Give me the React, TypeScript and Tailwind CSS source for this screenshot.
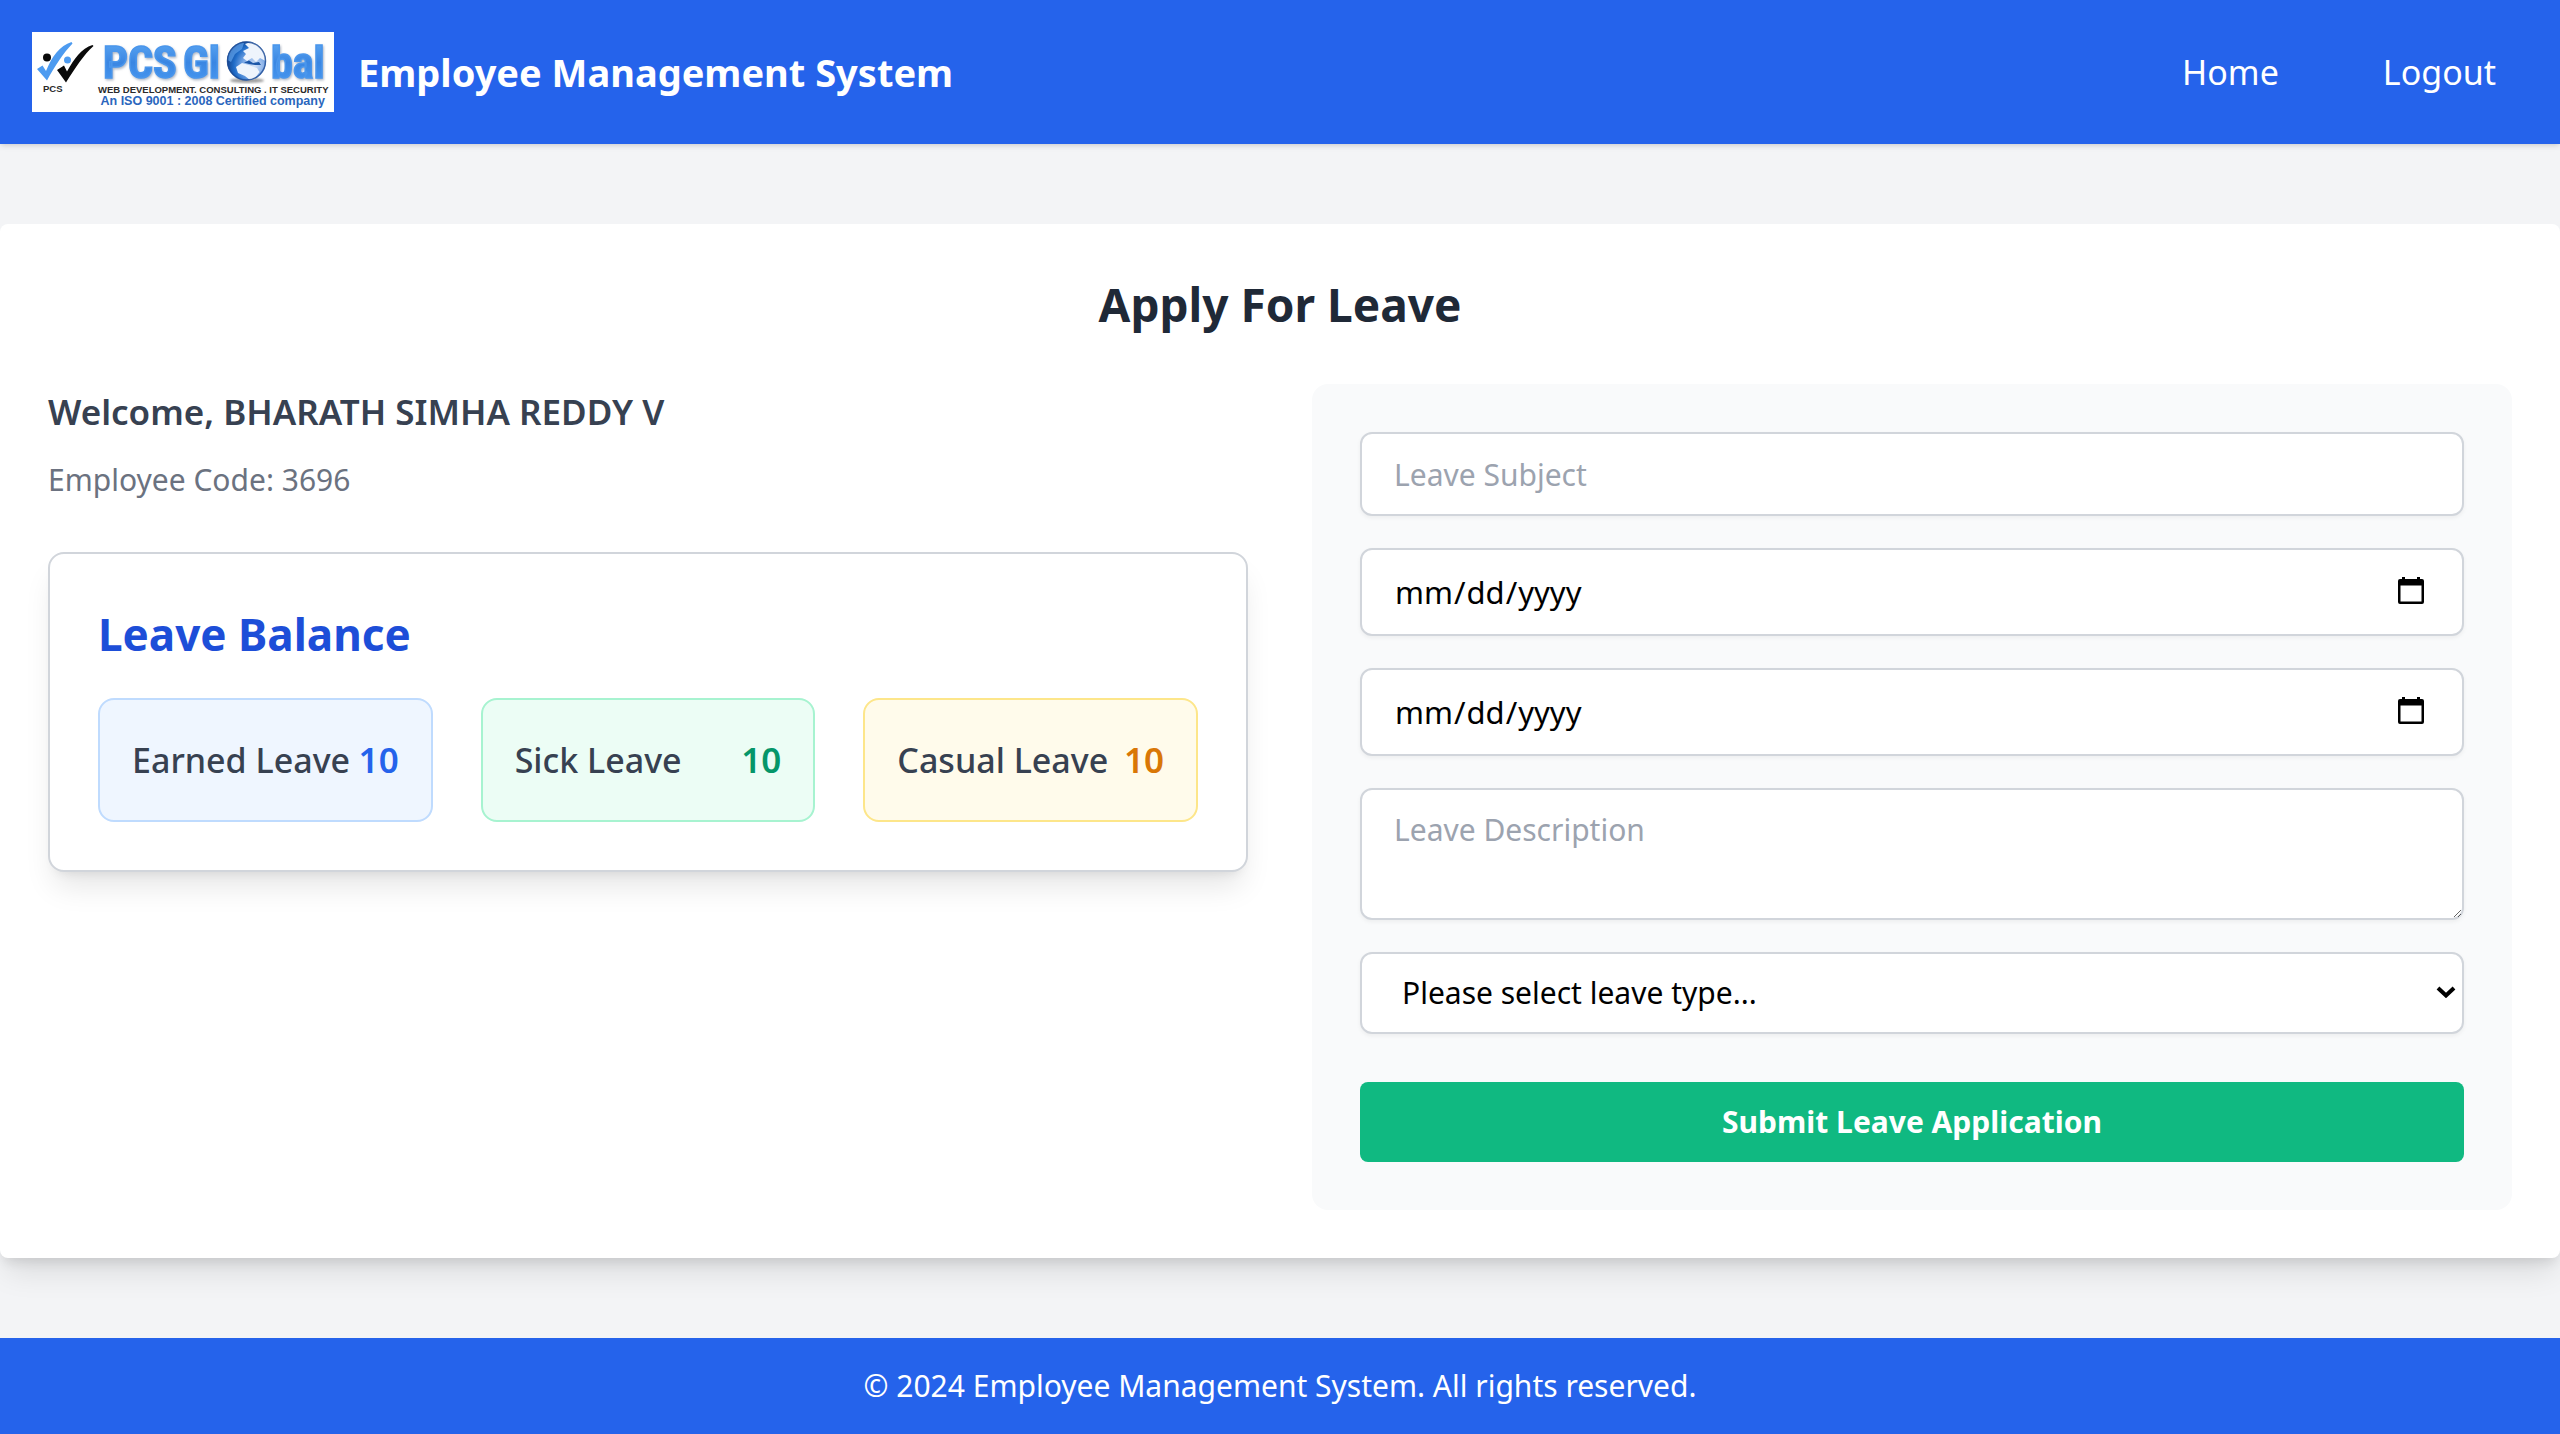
import { useId } from 'react';

function Logo() {
  const id = useId();
  const text = `${id}-text`;
  const globe = `${id}-globe`;
  const clip = `${id}-clip`;
  const soft = `${id}-soft`;
  return (
    <svg viewBox="0 0 604 160" className="h-20 w-auto shrink-0 bg-white" role="img" aria-label="PCS Global">
      <defs>
        <linearGradient id={text} x1="0" y1="0" x2="0" y2="1">
          <stop offset="0" stopColor="#62adf6" />
          <stop offset="0.5" stopColor="#3a86e2" />
          <stop offset="1" stopColor="#4a9cf4" />
        </linearGradient>
        <radialGradient id={globe} cx="0.7" cy="0.62" r="0.75">
          <stop offset="0" stopColor="#d5e2f6" />
          <stop offset="0.4" stopColor="#7aa8e6" />
          <stop offset="0.7" stopColor="#1f6cc8" />
          <stop offset="1" stopColor="#123a80" />
        </radialGradient>
        <clipPath id={clip}>
          <circle cx="429" cy="58" r="39" />
        </clipPath>
        <filter id={soft} x="-20%" y="-20%" width="140%" height="140%">
          <feGaussianBlur stdDeviation="2" />
        </filter>
      </defs>
      <path
        d="M10 74 L21 67 L28 78 C39 50 56 27 79 20 L81 23 C63 42 47 66 30 97 Z"
        fill="#4d9bf0"
      />
      <circle cx="30" cy="51" r="8" fill="#0a0a0a" />
      <circle cx="71" cy="56" r="7" fill="#4d9bf0" />
      <path
        d="M50 76 L64 67 L70 79 C84 54 99 32 121 26 L123 28 C103 46 88 70 68 101 Z"
        fill="#0a0a0a"
      />
      <g className="font-['Liberation_Sans',sans-serif] font-bold">
        <text x="22" y="120" fontSize="19" fill="#2a2a2a">
          PCS
        </text>
        <text x="132" y="121" fontSize="19" fill="#2a2a2a">
          WEB DEVELOPMENT. CONSULTING . IT SECURITY
        </text>
        <text x="137" y="146" fontSize="25" fill="#2a66bd">
          An ISO 9001 : 2008 Certified company
        </text>
      </g>
      <g
        className="font-['Roboto_Condensed','Roboto',sans-serif] font-bold"
        fontSize="88"
        fill={`url(#${text})`}
        stroke="#4a96ec"
        strokeWidth="3"
        style={{ filter: 'drop-shadow(2px 3px 2px rgb(90 110 140 / 0.5))' }}
      >
        <text x="142" y="91">
          PCS
        </text>
        <text x="302" y="91">
          Gl
        </text>
        <text x="478" y="91">
          bal
        </text>
      </g>
      <ellipse cx="430" cy="97" rx="34" ry="5" fill="#777" opacity="0.7" filter={`url(#${soft})`} />
      <circle cx="429" cy="58" r="39" fill={`url(#${globe})`} />
      <g clipPath={`url(#${clip})`}>
        <path d="M392 40 C400 24 412 20 424 22 L420 34 L406 44 L398 60 L391 56 Z" fill="#5fa4ee" opacity="0.7" />
        <path
          d="M426 24 L438 20 L456 26 L468 44 L467 58 L456 52 L448 60 L440 52 L430 58 L422 52 L428 44 L422 38 L434 32 Z"
          fill="#eef4fc"
        />
        <path d="M408 70 L420 62 L434 66 L450 72 L455 80 L446 92 L436 96 L426 88 L412 82 Z" fill="#eef4fc" />
        <path d="M424 61 L434 57 L442 62 L454 60 L458 66 L446 66 L434 64 Z" fill="#1c57a8" />
      </g>
      <circle cx="429" cy="58" r="38" fill="none" stroke="#1b4a94" strokeWidth="3" opacity="0.8" />
    </svg>
  );
}

const balances = [
  { label: 'Earned Leave', value: 10, box: 'border-[#bfdbfe] bg-[#eff6ff]', number: 'text-[#2563eb]' },
  { label: 'Sick Leave', value: 10, box: 'border-[#a7f3d0] bg-[#ecfdf5]', number: 'text-[#059669]' },
  { label: 'Casual Leave', value: 10, box: 'border-[#fde68a] bg-[#fffbeb]', number: 'text-[#d97706]' },
];

const field =
  'block w-full rounded-xl border-2 border-[#d1d5db] bg-white px-8 text-black shadow-[0_2px_4px_rgb(0_0_0/0.05)] placeholder:text-[#9ca3af]';

function DateField({ label }: { label: string }) {
  return (
    <div className="relative">
      <input
        type="date"
        aria-label={label}
        className={`${field} h-[88px] text-[31px] [&::-webkit-calendar-picker-indicator]:opacity-0`}
      />
      <svg
        viewBox="0 0 26 28"
        aria-hidden="true"
        className="pointer-events-none absolute top-7 right-10 h-7 w-[26px]"
      >
        <path
          fillRule="evenodd"
          d="M4 1h3v2h12V1h3v2h2a2 2 0 0 1 2 2v21a2 2 0 0 1-2 2H2a2 2 0 0 1-2-2V5a2 2 0 0 1 2-2h2zM2.500 9.500v16h21v-16z"
        />
      </svg>
    </div>
  );
}

export default function App() {
  return (
    <div className="flex min-h-screen flex-col bg-[#f3f4f6] font-['Noto_Sans',sans-serif] text-[30px] leading-[48px]">
      <header className="flex items-center justify-between bg-[#2563eb] p-8 text-white shadow-[0_2px_6px_rgb(0_0_0/0.1),0_2px_4px_-2px_rgb(0_0_0/0.1)]">
        <div className="flex items-center gap-6">
          <Logo />
          <span className="text-[38px] font-bold">Employee Management System</span>
        </div>
        <nav className="flex gap-10 text-[34px]">
          <a href="#home" className="px-8">
            Home
          </a>
          <a href="#logout" className="px-8">
            Logout
          </a>
        </nav>
      </header>

      <main className="my-20 rounded-lg bg-white p-12 shadow-[0_20px_30px_-6px_rgb(0_0_0/0.1),0_8px_12px_-4px_rgb(0_0_0/0.1)]">
        <h1 className="mb-12 text-center text-[46px] leading-[64px] font-bold text-[#1f2937]">Apply For Leave</h1>
        <div className="grid grid-cols-2 items-start gap-16">
          <section>
            <h2 className="text-[35px] leading-[56px] font-semibold text-[#374151]">
              Welcome, BHARATH SIMHA REDDY V
            </h2>
            <p className="mt-4 text-[#6b7280]">Employee Code: 3696</p>
            <div className="mt-12 rounded-2xl border-2 border-[#d1d5db] bg-white p-12 shadow-[0_20px_30px_-6px_rgb(0_0_0/0.1),0_8px_12px_-8px_rgb(0_0_0/0.1)]">
              <h3 className="mb-8 text-[44px] leading-[64px] font-bold text-[#1d4ed8]">Leave Balance</h3>
              <div className="grid grid-cols-3 gap-12">
                {balances.map((item) => (
                  <div
                    key={item.label}
                    className={`flex items-center justify-between rounded-2xl border-2 p-8 leading-[56px] whitespace-nowrap ${item.box}`}
                  >
                    <span className="text-[34px] font-medium text-[#374151]">{item.label}</span>
                    <span className={`text-[35px] font-semibold ${item.number}`}>{item.value}</span>
                  </div>
                ))}
              </div>
            </div>
          </section>

          <form className="flex flex-col gap-8 rounded-2xl bg-[#f9fafb] p-12">
            <input
              type="text"
              aria-label="Leave Subject"
              placeholder="Leave Subject"
              className={`${field} h-[84px]`}
            />
            <DateField label="From date" />
            <DateField label="To date" />
            <textarea
              rows={2}
              aria-label="Leave Description"
              placeholder="Leave Description"
              className={`${field} h-[132px] py-4`}
            />
            <div className="relative">
              <select aria-label="Leave type" className={`${field} h-[82px] appearance-none pl-10`}>
                <option>Please select leave type...</option>
              </select>
              <svg
                viewBox="0 0 20 12"
                aria-hidden="true"
                className="pointer-events-none absolute top-[34px] right-2 h-3 w-5"
              >
                <path d="M2 2l8 7.500L18 2" fill="none" stroke="black" strokeWidth="4" />
              </svg>
            </div>
            <button type="submit" className="mt-4 rounded-lg bg-[#10b981] py-4 font-bold text-white">
              Submit Leave Application
            </button>
          </form>
        </div>
      </main>

      <footer className="mt-auto bg-[#2563eb] py-6 text-center text-white">
        © 2024 Employee Management System. All rights reserved.
      </footer>
    </div>
  );
}
